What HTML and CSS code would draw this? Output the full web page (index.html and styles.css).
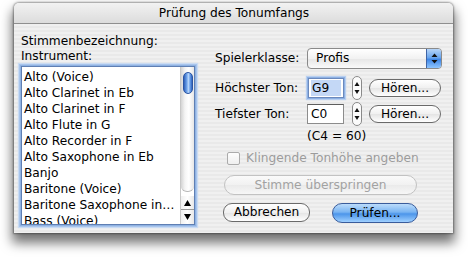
FILE: index.html
```html
<!DOCTYPE html>
<html lang="de">
<head>
<meta charset="utf-8">
<title>Prüfung des Tonumfangs</title>
<link rel="stylesheet" href="styles.css">
</head>
<body>
<div class="desk">
<div class="window">
  <div class="titlebar">Prüfung des Tonumfangs</div>
  <div class="content">
    <div class="left">
      <div class="label">Stimmenbezeichnung:</div>
      <div class="label">Instrument:</div>
      <div class="listbox">
        <ul class="items">
          <li>Alto (Voice)</li>
          <li>Alto Clarinet in Eb</li>
          <li>Alto Clarinet in F</li>
          <li>Alto Flute in G</li>
          <li>Alto Recorder in F</li>
          <li>Alto Saxophone in Eb</li>
          <li>Banjo</li>
          <li>Baritone (Voice)</li>
          <li>Baritone Saxophone in…</li>
          <li>Bass (Voice)</li>
        </ul>
        <div class="scrollbar">
          <div class="track"><div class="thumb"></div></div>
          <div class="arrow up"><svg width="7" height="6" viewBox="0 0 7 6"><path d="M3.5 0 L7 6 L0 6 Z" fill="#000"/></svg></div>
          <div class="arrow down"><svg width="7" height="6" viewBox="0 0 7 6"><path d="M0 0 L7 0 L3.5 6 Z" fill="#000"/></svg></div>
        </div>
      </div>
    </div>
    <div class="right">
      <div class="row r1">
        <div class="lbl">Spielerklasse:</div>
        <div class="popup">
          <div class="val">Profis</div>
          <div class="arrowbox"><svg width="7" height="11" viewBox="0 0 7 11"><path d="M3.5 0.5 L6.5 4 L0.5 4 Z M0.5 7 L6.5 7 L3.5 10.5 Z" fill="#111"/></svg></div>
        </div>
      </div>
      <div class="row r2">
        <div class="lbl">Höchster Ton:</div>
        <div class="field focus"><span class="sel">G9</span></div>
        <div class="stepper"><svg width="10" height="24" viewBox="0 0 10 24"><rect x="0.5" y="0.5" width="9" height="23" rx="4.5" fill="#fbfbfb" stroke="#8a8a8a"/><path d="M5 6 L7.5 10 L2.5 10 Z M2.5 14 L7.5 14 L5 18 Z" fill="#111"/></svg></div>
        <div class="btn hoeren">Hören...</div>
      </div>
      <div class="row r3">
        <div class="lbl">Tiefster Ton:</div>
        <div class="field"><span class="txt">C0</span></div>
        <div class="stepper"><svg width="10" height="24" viewBox="0 0 10 24"><rect x="0.5" y="0.5" width="9" height="23" rx="4.5" fill="#fbfbfb" stroke="#8a8a8a"/><path d="M5 6 L7.5 10 L2.5 10 Z M2.5 14 L7.5 14 L5 18 Z" fill="#111"/></svg></div>
        <div class="btn hoeren">Hören...</div>
      </div>
      <div class="row r4">(C4 = 60)</div>
      <div class="row r5">
        <div class="check"></div>
        <div class="checklbl">Klingende Tonhöhe angeben</div>
      </div>
      <div class="row r6">
        <div class="btn disabled skip">Stimme überspringen</div>
      </div>
      <div class="row r7">
        <div class="btn cancel">Abbrechen</div>
        <div class="btn default ok">Prüfen...</div>
      </div>
    </div>
  </div>
</div>
</div>
</body>
</html>
```
FILE: styles.css
```css
* { box-sizing: border-box; }
html, body { margin: 0; padding: 0; background: #fff; }
body {
  font-family: "DejaVu Sans", "Liberation Sans", sans-serif;
  font-size: 12.2px;
  color: #000;
}
.desk {
  width: 468px;
  height: 257px;
  padding: 3px 0 0 14px;
  background: #fff;
  overflow: hidden;
}
.window {
  width: 439px;
  height: 230px;
  border-radius: 5px 5px 0 0;
  box-shadow: 0 8px 12px 2px rgba(0,0,0,0.55), 0 0 2px 1px rgba(0,0,0,0.35);
  display: flex;
  flex-direction: column;
  background: #ececec;
}
.titlebar {
  height: 21px;
  line-height: 20px;
  text-align: center;
  border-bottom: 1px solid #8f8f8f;
  border-radius: 5px 5px 0 0;
  background: linear-gradient(#f2f2f2, #dcdcdc);
  padding-left: 1px;
}
.content {
  flex: 1;
  display: flex;
  background: repeating-linear-gradient(to bottom, #f0f0f0 0 2px, #e9e9e9 2px 4px);
}
.left {
  padding: 10px 0 0 7px;
  width: 201px;
}
.label { line-height: 15px; height: 15px; }
.listbox {
  margin-top: 2px;
  width: 174px;
  height: 159px;
  border: 1px solid #5f7fb3;
  background: #fff;
  box-shadow: 0 0 0 1px #8fb2e2, 0 0 0 2px #a9c5ec, 0 0 1px 3px #c9dbf3;
  display: flex;
  overflow: hidden;
}
.items {
  list-style: none;
  margin: 0;
  padding: 2px 0 0 2px;
  flex: 1;
  min-width: 0;
  overflow: hidden;
}
.items li {
  height: 16px;
  line-height: 16px;
  white-space: nowrap;
}
.scrollbar {
  width: 14px;
  display: flex;
  flex-direction: column;
  border-left: 1px solid #c8c8c8;
}
.track {
  flex: 1;
  background: linear-gradient(to right, #d4d4d4, #f4f4f4 30%, #fff 60%, #e6e6e6);
  border-radius: 0 0 6px 6px;
  border-bottom: 1px solid #b8b8b8;
  padding: 5px 0 0 2px;
}
.thumb {
  width: 10px;
  height: 22px;
  border-radius: 5px;
  border: 1px solid #2b55a3;
  background: linear-gradient(to right, #2f61bb, #6fa3ea 35%, #b7d6fb 55%, #5d94e2 80%, #2f61bb);
}
.arrow {
  height: 14px;
  display: flex;
  align-items: center;
  justify-content: center;
  background: linear-gradient(to right, #f0f0f0, #fff 50%, #e8e8e8);
}
.arrow.up { border-bottom: 1px solid #9a9a9a; margin-top: 4px; }
.right {
  padding-top: 23px;
  display: flex;
  flex-direction: column;
}
.row { display: flex; align-items: center; }
.r1 { height: 22px; }
.r2 { height: 26px; margin-top: 6px; }
.r3 { height: 26px; }
.r4 { height: 18px; padding-left: 92px; }
.r5 { height: 26px; padding-left: 12px; }
.r6 { height: 28px; padding-left: 9px; }
.r7 { height: 27px; padding-left: 8px; }
.lbl { width: 91px; white-space: nowrap; }
.popup {
  width: 135px;
  height: 21px;
  margin-left: 1px;
  border: 1px solid #8a8a8a;
  border-radius: 4px;
  background: linear-gradient(#ffffff, #f2f2f2 50%, #e6e6e6 51%, #fafafa);
  display: flex;
  overflow: hidden;
}
.popup .val { flex: 1; padding-left: 8px; line-height: 19px; }
.popup .arrowbox {
  width: 15px;
  border-left: 1px solid #3f64a5;
  background: linear-gradient(to bottom, #b6d5f8, #6aa6ee 45%, #3e86e6 55%, #8ec5ff);
  display: flex;
  align-items: center;
  justify-content: center;
}
.field {
  width: 37px;
  height: 20px;
  margin-left: 1px;
  border: 1px solid #8c8c8c;
  border-top-color: #5e5e5e;
  background: #fff;
  padding: 1px 2px;
  display: flex;
}
.field.focus {
  margin-left: 2px;
  width: 36px;
  border-color: #6b89bd;
  box-shadow: 0 0 0 1px #8eb1e3, 0 0 1px 2px #b8cff0;
}
.field .sel {
  flex: 1;
  background: #c4d8f6;
  line-height: 16px;
  padding-left: 1px;
}
.field .txt { line-height: 16px; padding-left: 1px; }
.stepper { margin-left: 8px; height: 24px; display: flex; }
.btn {
  height: 18px;
  border: 1px solid #6a6a6a;
  border-radius: 9px;
  background: linear-gradient(#ffffff, #f0f0f0 50%, #e4e4e4 51%, #ffffff);
  text-align: center;
  line-height: 16px;
  white-space: nowrap;
}
.hoeren { width: 72px; margin-left: 7px; }
.check {
  width: 13px;
  height: 13px;
  border: 1px solid #ababab;
  border-radius: 2px;
  background: linear-gradient(#fdfdfd, #efefef);
}
.checklbl { margin-left: 6px; color: #9c9c9c; }
.disabled {
  width: 193px;
  height: 20px;
  line-height: 18px;
  border-color: #c2c2c2;
  color: #a2a2a2;
  background: linear-gradient(#fafafa, #f1f1f1 50%, #eaeaea 51%, #f7f7f7);
  border-radius: 10px;
}
.cancel { width: 87px; height: 19px; line-height: 17px; }
.ok {
  width: 86px;
  height: 20px;
  line-height: 18px;
  margin-left: 22px;
  border-radius: 10px;
  border-color: #3a5c9b;
  background: linear-gradient(#bcdcfb, #79b4f2 45%, #4c95ea 55%, #9fd0ff);
}
```
